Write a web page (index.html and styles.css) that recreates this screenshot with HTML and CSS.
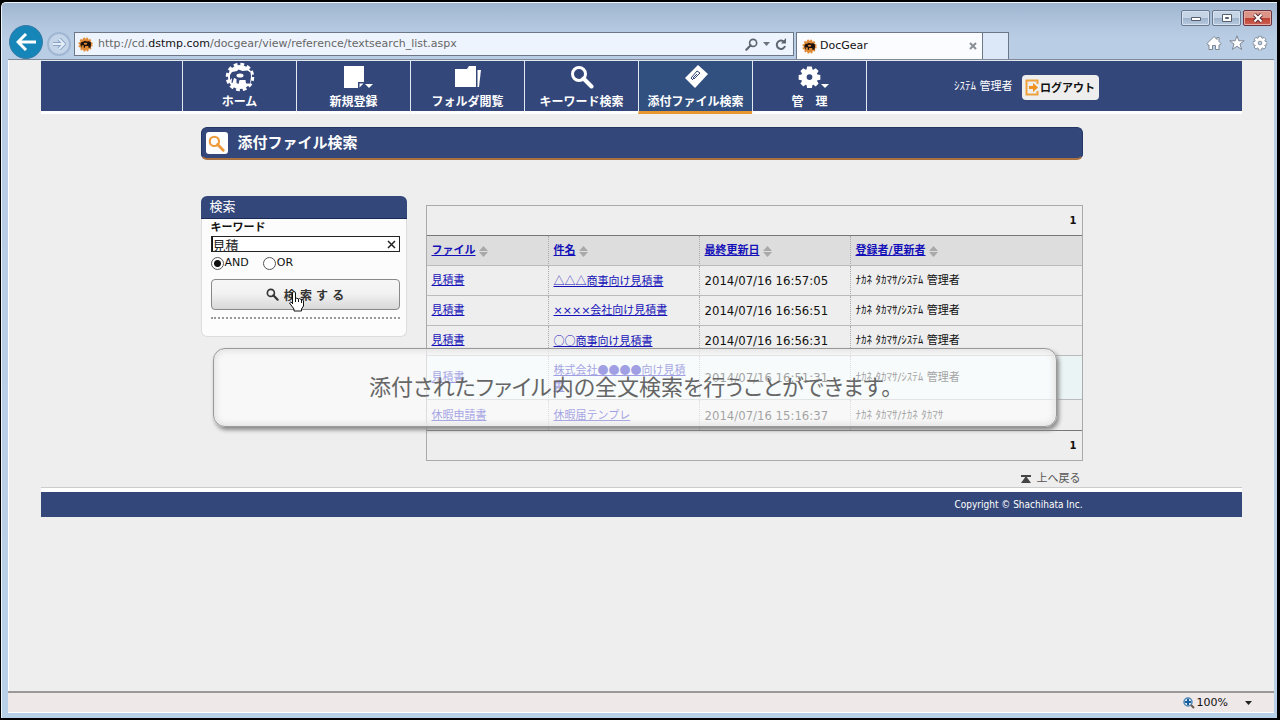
FILE: index.html
```
<!DOCTYPE html>
<html lang="ja">
<head>
  <meta charset="UTF-8" />
  <meta name="viewport" content="width=device-width, initial-scale=1.0"/>
  <title>DocGear</title>
  <link rel="stylesheet" href="styles.css">
</head>
<body>
  <svg class="defs" aria-hidden="true">
    <symbol id="cog" viewBox="0 0 24 24">
      <path fill-rule="evenodd" d="M9.500 1h5l.5 3 1 .5 2.500-1.700 3 3-1.700 2.500.5 1 3 .5v5l-3 .5-.5 1 1.700 2.500-3 3-2.500-1.700-1 .5-.5 3h-5l-.5-3-1-.5-2.500 1.700-3-3 1.700-2.500-.5-1-3-.5v-5l3-.5.5-1-1.700-2.500 3-3L8 4.500 9 4zM12 9a3 3 0 1 0 0 6 3 3 0 0 0 0-6z"/>
    </symbol>
    <symbol id="glass" viewBox="0 0 24 24">
      <circle cx="9" cy="9" r="6.500" fill="none" stroke="currentColor" stroke-width="3"/>
      <path d="M13.500 13.500l8 8" stroke="currentColor" stroke-width="4" stroke-linecap="round"/>
    </symbol>
    <symbol id="mascot" viewBox="0 0 30 30">
      <circle class="gear" cx="15" cy="15" r="12"/>
      <circle class="teeth" cx="15" cy="15" r="12.500" fill="none" stroke-width="3.500" stroke-dasharray="3.700 2.845"/>
      <path class="body" d="M5 13l2-3 5-1 1.500-1.500 4 1.500 5-.5 3 2 .5 4-1 7h-4l-.5-3.500h-6l-1 4-2-1v-4l-2.500-1-1.500 5H6.500L7 16l-2 2z"/>
      <ellipse class="gear" cx="15" cy="13.500" rx="3.500" ry="2"/>
    </symbol>
    <symbol id="sort" viewBox="0 0 9 11">
      <path fill="#a9a9a9" d="M4.500 0L9 5H0zM0 6h9l-4.500 5z"/>
    </symbol>
  </svg>

  <div class="window">
    <div class="titlebar">
      <button class="win-btn" aria-label="最小化"><svg width="12" height="8"><path d="M1.500 3.500h9v3h-9z" fill="#fff" stroke="#555f6e"/></svg></button>
      <button class="win-btn" aria-label="最大化"><svg width="12" height="10"><path d="M1.500 1.500h9v7h-9z" fill="#fff" stroke="#555f6e"/><path d="M4.500 4.500h3v1h-3z" fill="#8ea3ba" stroke="#555f6e"/></svg></button>
      <button class="win-btn close" aria-label="閉じる"><svg width="12" height="10"><path d="M2.500 1.500l7 7m0-7l-7 7" stroke="#5e3038" stroke-width="4"/><path d="M2.500 1.500l7 7m0-7l-7 7" stroke="#fff" stroke-width="2"/></svg></button>
    </div>

    <div class="toolbar">
      <button class="back" aria-label="戻る"><svg width="20" height="18" viewBox="0 0 20 18"><path d="M10 1L2 9l8 8M2 9h18" fill="none" stroke="#fff" stroke-width="3"/></svg></button>
      <button class="forward" aria-label="進む"><svg width="14" height="12" viewBox="0 0 14 12"><path d="M7 1l5 5-5 5M12 6H1" fill="none" stroke="#8ba4c4" stroke-width="4"/><path d="M7 1l5 5-5 5M12 6H1" fill="none" stroke="#e3edf8" stroke-width="2"/></svg></button>
      <div class="address">
        <svg class="favicon" width="15" height="15"><use href="#mascot"/></svg>
        <div class="url">http://cd.<b>dstmp.com</b>/docgear/view/reference/textsearch_list.aspx</div>
        <svg class="flip" width="13" height="13"><use href="#glass"/></svg>
        <svg width="7" height="4"><path d="M0 0h7L3.500 4z" fill="#6a7480"/></svg>
        <svg width="12" height="13" viewBox="0 0 12 13"><path d="M9.500 4.500A4.200 4.200 0 1 0 10 8" fill="none" stroke="#5d6570" stroke-width="2"/><path d="M6 5.500h5V0z" fill="#5d6570"/></svg>
      </div>
      <div class="tab">
        <svg class="favicon" width="15" height="15"><use href="#mascot"/></svg>
        <span>DocGear</span>
        <button class="plain" aria-label="タブを閉じる"><svg width="8" height="8"><path d="M1 1l6 6m0-6L1 7" stroke="#8a8f96" stroke-width="2"/></svg></button>
      </div>
      <button class="new-tab" aria-label="新しいタブ"></button>
      <div class="tools">
        <svg width="16" height="16"><path d="M8 1.500L1 8.500l1 1.500h1v4.500h3.500v-4h3v4H13V10h1l1-1.500-2-2V2.500h-2v2z" fill="#fff" stroke="#7d8794"/></svg>
        <svg width="16" height="16"><path d="M8 .8l1.800 5h5.400L11 9l1.600 5.400L8 11.300l-4.600 3.100L5 9 .8 5.800h5.400z" fill="#fff" stroke="#7d8794"/></svg>
        <svg width="16" height="16" viewBox="-1 -1 26 26" fill="#fff" stroke="#7d8794" stroke-width="1.500"><use href="#cog" width="24" height="24"/></svg>
      </div>
    </div>

    <div class="page">
      <header class="site-header">
        <nav>
          <a href="#"><svg width="30" height="30"><use href="#mascot"/></svg>ホーム</a>
          <a href="#"><svg width="30" height="30"><path d="M5 4h20v16h-6v6H5z" fill="#fff"/><path d="M20.500 21.500h4l-4 4z" fill="#fff"/></svg><i class="arrow"></i>新規登録</a>
          <a href="#"><svg width="30" height="30"><path d="M2 7h12l2-3h7v21H2z" fill="#fff"/><path d="M24.500 8h3.500l-2 17h-1.500z" fill="#fff"/></svg>フォルダ閲覧</a>
          <a href="#"><svg width="24" height="30"><use href="#glass"/></svg>キーワード検索</a>
          <a href="#" class="active"><svg width="30" height="30"><path d="M17 3l10 9-13 14L4 16z" fill="#fff"/><path d="M12 18l-2-2 6-7 3 2-6 6-1-1 4-4" fill="none" stroke="#34497b"/></svg>添付ファイル検索</a>
          <a href="#"><svg width="23" height="30"><use href="#cog"/></svg><i class="arrow"></i>管　理</a>
        </nav>
        <div class="user">
          <span>ｼｽﾃﾑ 管理者</span>
          <button class="logout"><svg width="14" height="17"><path d="M12.500 5V1.500h-11v14h11V12" fill="none" stroke="#eda13c" stroke-width="2"/><path d="M4 7h4V4l5 4.500L8 13v-3H4z" fill="#f0921e"/></svg>ログアウト</button>
        </div>
      </header>

      <main class="content">
        <h1><span class="title-icon"><svg width="17" height="17"><use href="#glass"/></svg></span>添付ファイル検索</h1>

        <div class="columns">
          <form class="search">
            <h2>検索</h2>
            <div class="search-body">
              <label class="keyword-label" for="keyword">キーワード</label>
              <div class="keyword">
                <input type="text" id="keyword" value="見積">
                <button type="button" class="plain" aria-label="クリア"><svg width="9" height="9"><path d="M1 1l7 7m0-7L1 8" stroke="#222" stroke-width="1.500"/></svg></button>
              </div>
              <div class="mode">
                <label><input type="radio" name="mode" checked>AND</label>
                <label><input type="radio" name="mode">OR</label>
              </div>
              <button type="button" class="submit">
                <svg width="13" height="13"><use href="#glass"/></svg><span>検 索 す る</span>
                <svg class="pointer" width="16" height="22" viewBox="0 0 16 22"><path d="M4.500 14V2.500q1.500-2 3 0V9l1-1 2 1 1-.500 1.500 1 1.500 0 1 1.500v5l-2 3v2H6v-2l-4.500-6q1-2 3 0z" fill="#fff" stroke="#111"/><path d="M7.500 9v3m3-3v3m3-2v3" stroke="#111"/></svg>
              </button>
              <hr>
            </div>
          </form>

          <div class="results">
            <div class="pager">1</div>
            <table>
              <thead>
                <tr>
                  <th><a href="#">ファイル</a><svg width="9" height="11"><use href="#sort"/></svg></th>
                  <th><a href="#">件名</a><svg width="9" height="11"><use href="#sort"/></svg></th>
                  <th><a href="#">最終更新日</a><svg width="9" height="11"><use href="#sort"/></svg></th>
                  <th><a href="#">登録者/更新者</a><svg width="9" height="11"><use href="#sort"/></svg></th>
                </tr>
              </thead>
              <tbody>
                <tr>
                  <td><a href="#">見積書</a></td>
                  <td><a href="#" class="wide">△△△商事向け見積書</a></td>
                  <td class="date">2014/07/16 16:57:05</td>
                  <td>ﾅｶﾈ ﾀｶﾏｻ/ｼｽﾃﾑ 管理者</td>
                </tr>
                <tr>
                  <td><a href="#">見積書</a></td>
                  <td><a href="#">××××会社向け見積書</a></td>
                  <td class="date">2014/07/16 16:56:51</td>
                  <td>ﾅｶﾈ ﾀｶﾏｻ/ｼｽﾃﾑ 管理者</td>
                </tr>
                <tr>
                  <td><a href="#">見積書</a></td>
                  <td><a href="#" class="wide">○○商事向け見積書</a></td>
                  <td class="date">2014/07/16 16:56:31</td>
                  <td>ﾅｶﾈ ﾀｶﾏｻ/ｼｽﾃﾑ 管理者</td>
                </tr>
                <tr class="hover">
                  <td><a href="#">見積書</a></td>
                  <td><a href="#" class="wide">株式会社●●●●向け見積書</a></td>
                  <td class="date">2014/07/16 16:51:31</td>
                  <td>ﾅｶﾈ ﾀｶﾏｻ/ｼｽﾃﾑ 管理者</td>
                </tr>
                <tr>
                  <td><a href="#">休暇申請書</a></td>
                  <td><a href="#">休暇届テンプレ</a></td>
                  <td class="date">2014/07/16 15:16:37</td>
                  <td>ﾅｶﾈ ﾀｶﾏｻ/ﾅｶﾈ ﾀｶﾏｻ</td>
                </tr>
              </tbody>
            </table>
            <div class="pager">1</div>
          </div>
        </div>

        <a href="#" class="to-top"><svg width="10" height="8"><path d="M0 0h10v2H0zM5 1l5 7H0z" fill="#444"/></svg>上へ戻る</a>

        <div class="caption">添付されたファイル内の全文検索を行うことができます。</div>
      </main>

      <footer><p>Copyright © Shachihata Inc.</p></footer>
    </div>

    <div class="statusbar">
      <svg width="12" height="12"><circle cx="5" cy="5" r="4" fill="#d7ecfa" stroke="#4e86b5" stroke-width="1.500"/><path d="M5 2v6M2 5h6" stroke="#1c5e9c" stroke-width="2"/><path d="M8 8l3 3" stroke="#6b5a50" stroke-width="2"/></svg>
      <span>100%</span>
      <svg class="zoom-arrow" width="7" height="4"><path d="M0 0h7L3.500 4z" fill="#222"/></svg>
    </div>
  </div>
</body>
</html>
```
FILE: styles.css
```
* {
  margin: 0;
  padding: 0;
  box-sizing: border-box;
}

body {
  min-height: 100vh;
  display: flex;
  padding: 2px 3px 2px 1px;
  background: #000;
  color: #111;
  font-family: "DejaVu Sans", "Noto Sans CJK JP", sans-serif;
  font-size: 11px;
  line-height: 16px;
}

button {
  font-family: inherit;
  border: none;
  background: none;
  display: flex;
  align-items: center;
  justify-content: center;
  cursor: pointer;
}

.defs {
  position: absolute;
  width: 0;
  height: 0;
}

.window {
  flex: 1;
  display: flex;
  flex-direction: column;
  padding: 0 3px 5px 6px;
  border: 1px solid #eef4fb;
  border-width: 1px 0 0 1px;
  border-radius: 5px 0 0 0;
  background: linear-gradient(#9fb5cf, #b0c4dd 20px, #b9cde5 36px, #b9d1e8);
}

/* browser frame */
.titlebar {
  height: 23px;
  display: flex;
  justify-content: flex-end;
  align-items: flex-end;
  gap: 2px;
  padding-right: 2px;
}

.win-btn {
  width: 29px;
  height: 16px;
  border: 1px solid #67788f;
  border-radius: 2px;
  background: linear-gradient(#c6d5e6 50%, #9db2ca 50%, #b8cbe0);
  box-shadow: inset 0 0 0 1px #d6e2ef;
}

.close {
  background: linear-gradient(#dc9488 50%, #bd3f32 50%, #cd6455);
  border-color: #6b3340;
  box-shadow: inset 0 0 0 1px #e5aaa0;
}

.toolbar {
  height: 34px;
  display: flex;
  align-items: flex-end;
  padding-left: 1px;
  border-bottom: 1px solid #7d8a9a;
}

.back {
  width: 34px;
  height: 34px;
  border-radius: 50%;
  background: #1685b8;
  border: 1px solid #3c7ba6;
}

.forward {
  width: 24px;
  height: 24px;
  margin: 0 3px 3px 4px;
  border: 2px solid #a1b6d2;
  border-radius: 50%;
  background: #c4d5ea;
}

.address {
  flex: 1;
  height: 24px;
  margin: 0 2px 3px 0;
  padding: 0 6px 0 3px;
  display: flex;
  align-items: center;
  gap: 5px;
  border: 1px solid #6c7888;
  background: #eef4fd;
  color: #5d6570;
}

.url {
  flex: 1;
  color: #666;
  white-space: nowrap;
}

.url b {
  font-weight: normal;
  color: #111;
}

.flip {
  transform: scaleX(-1);
}

.tab {
  width: 187px;
  height: 27px;
  padding: 0 5px;
  display: flex;
  align-items: center;
  gap: 3px;
  border: 1px solid #6c7888;
  border-bottom: none;
  background: #fafcff;
}

.tab span {
  flex: 1;
}

.new-tab {
  width: 26px;
  height: 27px;
  border: 1px solid #6c7888;
  border-width: 1px 1px 0 0;
  background: #dce8f8;
}

.tools {
  flex: 0 0 265px;
  height: 24px;
  padding-right: 6px;
  display: flex;
  justify-content: flex-end;
  gap: 7px;
}

/* mascot colours */
.favicon {
  --gear: #e08a35;
  --body: #1a100c;
}

nav svg {
  --gear: #fff;
  --body: #34477a;
}

.gear {
  fill: var(--gear);
}

.teeth {
  stroke: var(--gear);
}

.body {
  fill: var(--body);
}

/* page */
.page {
  flex: 1;
  border-left: 1px solid #fff;
  background: #eee;
}

.site-header {
  height: 54px;
  margin: 0 32px;
  padding-left: 141px;
  display: flex;
  border-top: 1px solid #e4e8ee;
  border-bottom: 3px solid #fff;
  background: #34477a;
}

nav {
  display: flex;
  border-right: 1px solid #e3e9f3;
}

nav a {
  position: relative;
  width: 114px;
  height: 53px;
  display: flex;
  flex-direction: column;
  justify-content: flex-end;
  align-items: center;
  padding-bottom: 1px;
  border-left: 1px solid #e3e9f3;
  border-bottom: 3px solid #fff;
  color: #fff;
  font-size: 12px;
  font-weight: bold;
  text-decoration: none;
  fill: #fff;
}

nav a svg {
  margin-bottom: 2px;
}

nav a.active {
  background: #315080;
  border-bottom-color: #e8962f;
}

.arrow {
  position: absolute;
  left: 68px;
  top: 23px;
  border: 4px solid transparent;
  border-top-color: #fff;
}

.user {
  flex: 1;
  display: flex;
  align-items: center;
  gap: 9px;
  padding: 2px 0 0 87px;
  color: #fff;
}

.logout {
  width: 77px;
  height: 25px;
  gap: 1px;
  border-radius: 4px;
  background: #eee;
  color: #111;
  font-size: 11px;
  font-weight: bold;
  white-space: nowrap;
}

.content {
  position: relative;
  max-width: 882px;
  margin: 0 auto;
  padding: 13px 0 1px;
}

h1 {
  height: 33px;
  display: flex;
  align-items: center;
  gap: 10px;
  padding-left: 4px;
  border: 1px solid #223564;
  border-bottom: 2px solid #a8713f;
  border-radius: 6px;
  background: #34477a;
  color: #fff;
  font-size: 15px;
}

.title-icon {
  width: 22px;
  height: 22px;
  display: flex;
  align-items: center;
  justify-content: center;
  border-radius: 3px;
  background: #fff;
  color: #ee9a3a;
}

.columns {
  display: flex;
  align-items: flex-start;
  gap: 19px;
  margin-top: 36px;
}

.search {
  width: 206px;
  border-radius: 6px;
  background: #fcfcfc;
  border: 1px solid #ddd;
  border-top: none;
}

.search h2 {
  height: 23px;
  margin: 0 -1px;
  padding-left: 9px;
  border-radius: 6px 6px 0 0;
  border-bottom: 1px solid #1b2b58;
  background: #34477a;
  color: #fff;
  font-size: 13px;
  font-weight: normal;
  line-height: 22px;
}

.search-body {
  height: 117px;
  padding: 0 6px 0 9px;
}

.keyword-label {
  display: block;
  font-weight: bold;
  line-height: 17px;
}

.keyword {
  height: 16px;
  display: flex;
  align-items: center;
  padding-right: 3px;
  border: 1px solid #222;
  background: #fff;
}

.keyword input {
  flex: 1;
  min-width: 0;
  height: 14px;
  border: none;
  border-left: 1px solid #111;
  outline: none;
  color: #222;
  font-family: inherit;
  font-size: 13px;
}

.mode {
  display: flex;
  gap: 14px;
  margin: 3px 0 8px;
}

.mode label {
  display: flex;
  align-items: center;
  gap: 1px;
}

.mode input {
  appearance: none;
  width: 13px;
  height: 13px;
  border: 1px solid #555;
  border-radius: 50%;
  background: #fff;
}

.mode input:checked {
  background: radial-gradient(#111 3px, #fff 4px);
}

.submit {
  position: relative;
  width: 100%;
  height: 31px;
  gap: 5px;
  border: 1px solid #888;
  border-radius: 4px;
  background: linear-gradient(#f6f6f6, #f2f2f2 45%, #d8d8d8);
  color: #333;
  font-size: 12px;
  font-weight: bold;
}

.pointer {
  position: absolute;
  left: 76px;
  top: 10px;
}

hr {
  margin-top: 7px;
  border: none;
  border-top: 2px dotted #999;
}

.results {
  flex: 1;
  margin-top: 9px;
  border: 1px solid #aaa;
}

.pager {
  height: 29px;
  padding-right: 5px;
  font-size: 10px;
  font-weight: bold;
  line-height: 29px;
  text-align: right;
}

table {
  width: 100%;
  table-layout: fixed;
  border-collapse: separate;
  border-spacing: 0;
  border-top: 1px solid #777;
  border-bottom: 1px solid #777;
}

th,
td {
  height: 30px;
  padding: 0 5px;
  border-bottom: 1px solid #bbb;
  border-right: 1px dotted #aaa;
  text-align: left;
  line-height: 15px;
}

th {
  background: #ddd;
}

th:first-child {
  width: 122px;
}

th:nth-child(2),
th:nth-child(3) {
  width: 151px;
}

th:last-child,
td:last-child {
  border-right: none;
}

tr:last-child td {
  border-bottom: none;
}

th svg {
  margin-left: 3px;
  vertical-align: middle;
}

td a,
th a {
  color: #1511b8;
}

.wide {
  font-family: "Noto Sans CJK JP", sans-serif;
}

.date {
  font-family: "DejaVu Sans Condensed", "DejaVu Sans", sans-serif;
  font-size: 13px;
}

.hover td {
  height: 44px;
  background: #eaf4f4;
}

.to-top {
  display: flex;
  align-items: center;
  justify-content: flex-end;
  gap: 6px;
  margin: 10px 2px 0 0;
  color: #555;
  text-decoration: none;
}

.caption {
  position: absolute;
  left: 12px;
  right: 26px;
  top: 234px;
  height: 79px;
  padding-right: 8px;
  border: 1px solid #999;
  border-radius: 12px;
  background: rgba(255, 255, 255, 0.6);
  box-shadow: inset 0 0 5px 3px rgba(225, 225, 225, 0.8), 2px 3px 4px #888;
  color: #666;
  font-family: "Noto Sans CJK JP", sans-serif;
  font-size: 22px;
  font-feature-settings: "palt";
  line-height: 72px;
  text-align: center;
}

footer {
  margin: 0 32px;
  border-top: 4px solid #fff;
  background: #34477a;
  box-shadow: 0 -1px #ccc;
}

footer p {
  max-width: 882px;
  margin: 0 auto;
  color: #fff;
  font-family: "DejaVu Sans Condensed", "DejaVu Sans", sans-serif;
  font-size: 10px;
  line-height: 25px;
  text-align: right;
}

.statusbar {
  height: 22px;
  display: flex;
  align-items: center;
  justify-content: flex-end;
  gap: 2px;
  padding-right: 22px;
  border-top: 2px solid #999;
  border-bottom: 1px solid #fff;
  background: #eee8e8;
}

.zoom-arrow {
  margin-left: 15px;
}
```
